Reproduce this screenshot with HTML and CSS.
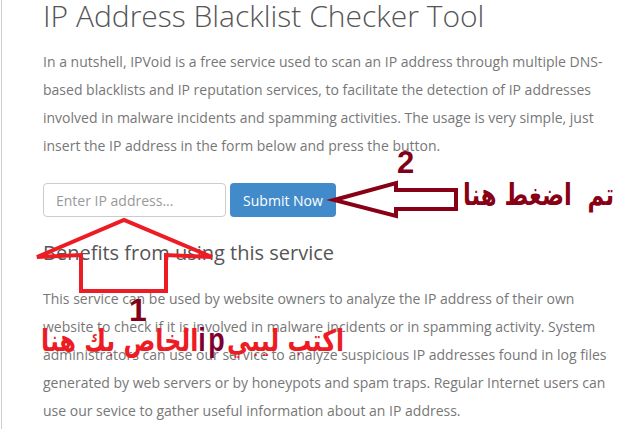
FILE: index.html
```html
<!DOCTYPE html>
<html lang="en">
<head>
  <meta charset="UTF-8" />
  <title>IP Address Blacklist Checker Tool</title>
  <link rel="stylesheet" href="styles.css">
</head>
<body>

  <div class="page">
    <h1>IP Address Blacklist Checker Tool</h1>
    <p>In a nutshell, IPVoid is a free service used to scan an IP address through multiple DNS-based blacklists and IP reputation services, to facilitate the detection of IP addresses involved in malware incidents and spamming activities. The usage is very simple, just insert the IP address in the form below and press the button.</p>

    <form class="checkForm" onsubmit="return false">
      <input type="text" class="ipInput" placeholder="Enter IP address..." />
      <button type="submit" class="submitBtn">Submit Now</button>
    </form>

    <h2>Benefits from using this service</h2>
    <p>This service can be used by website owners to analyze the IP address of their own website to check if it is involved in malware incidents or in spamming activity. System administrators can use our service to analyze suspicious IP addresses found in log files generated by web servers or by honeypots and spam traps. Regular Internet users can use our sevice to gather useful information about an IP address.</p>

    <!-- annotations drawn on top of the screenshot -->
    <svg class="marks" width="633" height="429" viewBox="0 0 633 429">
      <polygon class="arrowUp" points="36,257 123,220 211,257 165,255 165,291 80,291 80,255" />
      <polygon class="arrowLeft" points="333,200 395,183 395,190 455,190 455,209 395,209 395,216" />
    </svg>
    <span class="num numOne">1</span>
    <span class="num numTwo">2</span>
    <span class="note noteOne" dir="rtl">اكتب ليبي<b>ip</b>الخاص بك هنا</span>
    <span class="note noteTwo" dir="rtl">تم&nbsp;&nbsp;اضغط هنا</span>
  </div>

</body>
</html>
```

FILE: styles.css
```css
body {
  margin: 0;
  background: #fff;
  font-family: "Open Sans", Arial, sans-serif;
}
.page {
  position: relative;
  width: 631px;
  height: 429px;
  overflow: hidden;
  border-left: 1px solid #ccc;
  margin-left: 1px;
  padding: 0 20px 0 41px;
  box-sizing: border-box;
}
h1 {
  margin: 0;
  font-size: 30px;
  font-weight: 300;
  line-height: 32px;
  color: #555;
}
p {
  margin: 16px 0 0;
  font-size: 14px;
  line-height: 28px;
  color: #777;
}
.checkForm {
  display: flex;
  gap: 4px;
  margin-top: 23px;
}
.ipInput {
  width: 183px;
  height: 34px;
  box-sizing: border-box;
  padding: 6px 12px;
  border: 1px solid #ccc;
  border-radius: 4px;
  font-family: inherit;
  font-size: 14px;
  color: #555;
}
.ipInput::placeholder {
  color: #999;
}
.submitBtn {
  width: 106px;
  height: 34px;
  padding: 0;
  background: #428bca;
  color: #fff;
  border: none;
  border-radius: 4px;
  font-family: inherit;
  font-size: 14px;
}
h2 {
  margin: 21px 0 0;
  font-size: 20px;
  font-weight: 400;
  line-height: 30px;
  color: #555;
}
h2 + p {
  margin-top: 17px;
}
.marks {
  position: absolute;
  left: -1px;
  top: 0;
}
.arrowUp {
  fill: none;
  stroke: #ed1c24;
  stroke-width: 4;
}
.arrowLeft {
  fill: none;
  stroke: #880015;
  stroke-width: 4;
}
.num {
  position: absolute;
  font-family: "Liberation Sans", Arial, sans-serif;
  font-weight: 700;
  color: #7f0018;
  line-height: 1;
}
.numOne {
  left: 127px;
  top: 294px;
  font-size: 32px;
}
.numTwo {
  left: 395px;
  top: 147px;
  font-size: 31px;
}
.note {
  position: absolute;
  font-family: "DejaVu Sans", sans-serif;
  font-weight: 700;
  line-height: 1;
  white-space: nowrap;
  transform-origin: left top;
}
.noteOne {
  left: 39px;
  top: 322px;
  font-size: 30px;
  color: #ed1c24;
  transform: scaleX(0.79);
}
.noteOne b {
  font-family: "Liberation Sans", Arial, sans-serif;
  font-size: 34px;
  letter-spacing: 3px;
  color: #7f0030;
}
.noteTwo {
  left: 461px;
  top: 180px;
  font-size: 30px;
  color: #880015;
  transform: scaleX(0.76);
}
```
